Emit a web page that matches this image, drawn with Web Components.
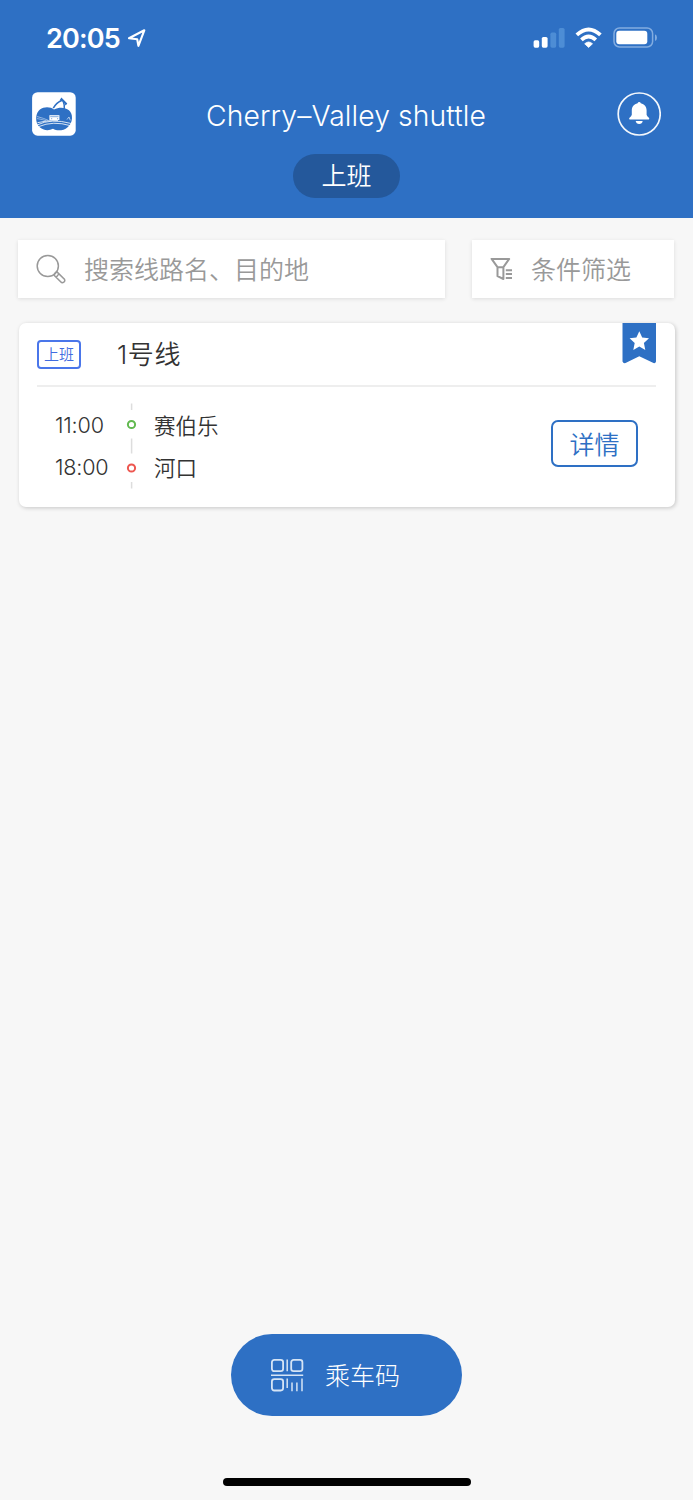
<!DOCTYPE html>
<html lang="zh-CN">
<head>
<meta charset="utf-8">
<title>Cherry–Valley shuttle</title>
<style>
html,body{margin:0;padding:0;background:#f7f7f7}
body{width:693px;height:1500px;overflow:hidden;font-family:Inter,"Noto Sans CJK SC",sans-serif}
</style>
</head>
<body>
<shuttle-app></shuttle-app>
<script>
const define = (name, html) => {
  const t = document.createElement('template');
  t.innerHTML = html;
  customElements.define(name, class extends HTMLElement {
    constructor() {
      super();
      this.attachShadow({mode: 'open'}).append(t.content.cloneNode(true));
    }
  });
};

define('status-bar', `
<style>
:host{display:flex;height:76px;box-sizing:border-box;padding:0 36px 0 46px;align-items:center;justify-content:space-between;color:#fff}
.l,.r{display:flex;align-items:center}
time{font:600 27px/34px Inter,sans-serif;letter-spacing:-.8px;width:81px;white-space:nowrap;padding-top:2px}
svg{display:block}
</style>
<div class="l"><time>20:05</time>
<svg width="20" height="22" viewBox="0 0 20 22" fill="none" stroke="#fff" stroke-width="2.1" stroke-linejoin="round"><path d="M2 11.3 17.3 3.3 11.4 18.8 10.2 12.2Z"/></svg></div>
<div class="r">
<svg width="124" height="24" viewBox="0 0 124 24">
<g fill="#fff"><rect x=".6" y="14.3" width="5.6" height="7.4" rx="1.6"/><rect x="8.8" y="11" width="5.8" height="10.7" rx="1.6"/>
<g fill="#4d8dd5"><rect x="17.4" y="6.6" width="5.8" height="15.1" rx="1.6"/><rect x="25.8" y="2" width="5.8" height="19.7" rx="1.6"/></g>
<path d="M55.6 21.4 51.7 17.8Q55.6 14.2 59.5 17.8Z" stroke="#fff" stroke-width=".8" stroke-linejoin="round"/></g>
<g fill="none" stroke="#fff" stroke-width="3.8"><path d="M43.8 8.9Q55.6-2 67.4 8.9"/><path d="M48.4 13.9Q55.6 7.3 62.8 13.9"/></g>
<rect x="81" y="2" width="38.6" height="19" rx="5.5" fill="none" stroke="#82ace0" stroke-width="1.5"/>
<rect x="83.3" y="4.8" width="31" height="13.4" rx="3" fill="#fff"/>
<path d="M122 8.3Q124 9.3 124 11.7T122 15Z" fill="#82ace0"/>
</svg></div>`);

define('app-logo', `
<style>:host{display:block;width:44px;height:44px}svg{display:block}</style>
<svg width="44" height="44" viewBox="0 0 44 44">
<rect x=".1" y=".2" width="43.6" height="43.5" rx="5.5" fill="#fff"/>
<path d="M22 17.5C17 13.5 5 14.3 4.2 25.5 3.5 36.5 14 40.5 21 36.8 27.8 40.8 39.5 37 40 26.2 40.5 16.3 30 13.8 22 17.5Z" fill="#2e70c4"/>
<path d="M21.3 16.2Q24 11 29.6 8.5M32.3 17Q32.6 12.5 31 8.5" fill="none" stroke="#2e70c4" stroke-width="1.5"/>
<path d="M27.6 8.3 29.4 5.5 35.3 11.4 33.7 13.4 31.5 10Z" fill="#2e70c4"/>
<path d="M17.4 23.2H27.4V28H17.4Z" fill="#fff"/>
<path d="M19 26.7h1.2M25 26.7h1.2M18.2 24.7h8.4" stroke="#2e70c4" stroke-width=".6"/>
<path d="M5 24.5Q12 26.3 16 28.2M5 26.6Q11 27.4 14 28.8" fill="none" stroke="#abc6e8" stroke-width=".8"/>
<path d="M4.7 33.2Q19 25.8 39.2 31.5M6.5 34.7Q21 28.3 38.5 33.7M5.5 30.7Q15 28.1 26 28.5" fill="none" stroke="#fff" stroke-width=".8"/>
<path d="M35 27.5l2-2.5 1.3 3.4" fill="none" stroke="#d1dff1" stroke-width=".8"/>
</svg>`);

define('notify-button', `
<style>:host{display:block;width:44px;height:44px}svg{display:block}</style>
<svg width="44" height="44" viewBox="0 0 44 44">
<circle cx="22.2" cy="22" r="21" fill="none" stroke="#f3f7fc" stroke-width="1.7"/>
<path d="M20.6 11.2A1.7 1.7 0 0 1 23.8 11.2C27.5 12 29.6 14.8 29.6 18.2V22.7Q29.8 24.2 32.1 26.1 32.6 27.4 31.7 27.6H12.7Q11.8 27.4 12.3 26.1 14.6 24.2 14.8 22.7V18.2C14.8 14.8 16.9 12 20.6 11.2Z" fill="#fff"/>
<path d="M18.7 29.1H25.7Q25.2 32 22.2 32T18.7 29.1Z" fill="#fff"/>
</svg>`);

define('app-header', `
<style>
:host{display:block;height:218px;background:#2e70c4;color:#fff}
.bar{display:flex;justify-content:space-between;align-items:center;height:44px;margin-top:16px;padding:0 32px}
h1{margin:0;font:300 28.3px/44px Inter,sans-serif;white-space:nowrap;letter-spacing:.1px;padding:3px 1px 0 0}
.pill{display:block;width:107px;height:44px;margin:18px auto 0;border-radius:22px;background:#24589b;text-align:center;font:350 25px/41px "Noto Sans CJK SC",sans-serif}
</style>
<status-bar></status-bar>
<div class="bar"><app-logo></app-logo><h1><slot name="title"></slot></h1><notify-button></notify-button></div>
<div class="pill"><slot name="mode"></slot></div>`);

define('search-field', `
<style>
:host{display:flex;align-items:center;width:427px;height:58px;background:#fff;box-shadow:0 1px 4px rgba(0,0,0,.11);color:#999;font:350 25px/36px "Noto Sans CJK SC",sans-serif;box-sizing:border-box;padding-left:18px;gap:18px}
svg{display:block}
.t{padding-bottom:2px}
</style>
<svg width="30" height="30" viewBox="0 0 30 30" fill="none" stroke="#999" stroke-width="1.5"><circle cx="11.8" cy="12" r="10.6"/><path d="M18.8 19.4 20.7 17.6 28.4 25.1Q29.4 27 27.8 28.2 26.1 29.5 24.9 28L18.6 21.8Q17.8 20.6 18.8 19.4ZM20.2 23.2 22.9 19.9"/></svg>
<span class="t"><slot></slot></span>`);

define('filter-button', `
<style>
:host{display:flex;align-items:center;width:202px;height:58px;background:#fff;box-shadow:0 1px 4px rgba(0,0,0,.11);color:#999;font:350 25px/36px "Noto Sans CJK SC",sans-serif;box-sizing:border-box;padding-left:18px;gap:17px}
svg{display:block}
.t{padding-bottom:2px}
</style>
<svg width="24" height="24" viewBox="0 0 24 24" fill="none" stroke="#999" stroke-width="2"><path d="M1.6 1.9H19.2L13.4 10.1V22L7.5 19.2V10.1ZM7.5 10.3H13.4" stroke-linejoin="round"/><path d="M15.8 13.2H22M15.8 17.1H22M15.8 21H22"/></svg>
<span class="t"><slot></slot></span>`);

define('route-stop', `
<style>
:host{display:flex;height:42px;align-items:center;color:#333}
.t{width:99px;font:300 21.6px/42px Inter,sans-serif;white-space:nowrap;letter-spacing:-.2px}
.n{font:350 21.5px/42px "Noto Sans CJK SC",sans-serif;white-space:nowrap}
</style>
<span class="t"><slot name="time"></slot></span><span class="n"><slot></slot></span>`);

define('route-card', `
<style>
:host{display:block;width:656px;height:184px;box-sizing:border-box;padding:0 18px;background:#fff;border-radius:7px;box-shadow:1px 1px 4px rgba(0,0,0,.2);position:relative}
.head{display:flex;height:62px;align-items:center;border-bottom:2px solid #eee;margin-right:1px}
.tag{box-sizing:border-box;width:44px;height:29px;border:2px solid #4a76ea;border-radius:4px;color:#416ce0;text-align:center;font:350 15px/24px "Noto Sans CJK SC",sans-serif;margin-right:36px}
.name{color:#333;font:350 26px/40px Inter,"Noto Sans CJK SC",sans-serif;padding-top:2px;letter-spacing:.6px}
.flag{position:absolute;left:603px;top:0;display:block}
.body{display:flex;align-items:center;justify-content:space-between;height:118px;padding:0 19px 0 18px}
.stops{position:relative;height:84px}
.track{position:absolute;left:70px;top:-1px}
button{box-sizing:border-box;width:87px;height:47px;padding:0;border:2px solid #2e70c4;border-radius:7px;background:#fff;color:#2e70c4;font:350 25px/41px "Noto Sans CJK SC",sans-serif;margin-bottom:5px}
</style>
<div class="head"><span class="tag"><slot name="tag"></slot></span><span class="name"><slot name="name"></slot></span></div>
<svg class="flag" width="35" height="42" viewBox="0 0 35 42"><path d="M.5 0H34V38.5Q33.5 40.6 31.5 40L17.3 33.2 3.5 40Q1.3 40.6.5 38.5Z" fill="#2e70c4"/><path d="M17.3 8.3 20.2 14.6 27 15.3 21.9 19.9 23.3 26.9 17.3 23.5 11.3 26.9 12.7 19.9 7.6 15.3 14.4 14.6Z" fill="#fff"/></svg>
<div class="body"><div class="stops">
<svg class="track" width="14" height="88" viewBox="0 0 14 88" fill="none" stroke-width="2"><path d="M6.6 .5V7M6.6 35.5V50.5M6.6 79V85.5" stroke="#ddd" stroke-width="1.5"/><circle cx="6.5" cy="21.5" r="3.6" stroke="#62b950"/><circle cx="6.5" cy="65" r="3.6" stroke="#ed5750"/></svg>
<slot></slot></div><button><slot name="action"></slot></button></div>`);

define('ride-code-button', `
<style>
:host{display:flex;align-items:center;width:231px;height:82px;box-sizing:border-box;padding-left:39px;gap:21px;border-radius:41px;background:#2e70c4;color:#fff;font:300 25px/36px "Noto Sans CJK SC",sans-serif}
svg{display:block}
.t{padding-bottom:2px}
</style>
<svg width="34" height="34" viewBox="0 0 34 34" fill="none" stroke="#d5e4f5" stroke-width="1.8"><rect x="1.9" y="1.9" width="11.2" height="11.3" rx="2.4"/><rect x="21.2" y="1.9" width="11.2" height="11.3" rx="2.4"/><rect x="1.9" y="21.2" width="11.2" height="11.3" rx="2.4"/><path d="M17.2 1.5V13.3M1 17.2H33.2M17.2 20.5V30M22 24.5V33.2M26.9 24.5V33.2M32 20.5V33.2" stroke-width="1.5"/></svg>
<span class="t"><slot></slot></span>`);

define('shuttle-app', `
<style>
:host{display:flex;flex-direction:column;width:693px;height:1500px;background:#f7f7f7}
.tools{display:flex;justify-content:space-between;padding:22px 19px 0 18px;height:58px}
route-card{margin:25px 0 0 19px}
.foot{margin-top:auto;display:flex;flex-direction:column;align-items:center;gap:62px;padding-bottom:14px}
.home{width:248px;height:8px;border-radius:4px;background:#000}
</style>
<app-header><span slot="title">Cherry–Valley shuttle</span><span slot="mode">上班</span></app-header>
<div class="tools"><search-field>搜索线路名、目的地</search-field><filter-button>条件筛选</filter-button></div>
<route-card><span slot="tag">上班</span><span slot="name">1号线</span>
<route-stop><span slot="time">11:00</span>赛伯乐</route-stop>
<route-stop><span slot="time">18:00</span>河口</route-stop>
<span slot="action">详情</span></route-card>
<div class="foot"><ride-code-button>乘车码</ride-code-button><div class="home"></div></div>`);
</script>
</body>
</html>
